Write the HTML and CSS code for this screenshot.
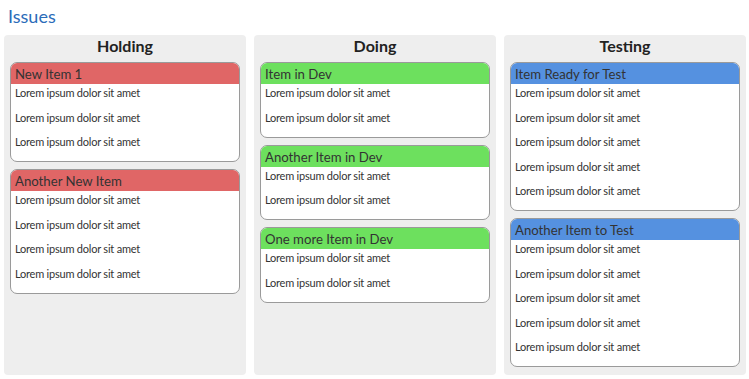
FILE: index.html
```html
<!DOCTYPE html>
<html>
<head>
<meta charset="utf-8">
<link rel="stylesheet" href="styles.css">
</head>
<body>
<h1 class="title">Issues</h1>
<div class="board">
  <section class="column">
    <h2 class="column-title">Holding</h2>
    <div class="card card-red">
      <div class="card-head">New Item 1</div>
      <div class="card-body">
        <p>Lorem ipsum dolor sit amet</p>
        <p>Lorem ipsum dolor sit amet</p>
        <p>Lorem ipsum dolor sit amet</p>
      </div>
    </div>
    <div class="card card-red">
      <div class="card-head">Another New Item</div>
      <div class="card-body">
        <p>Lorem ipsum dolor sit amet</p>
        <p>Lorem ipsum dolor sit amet</p>
        <p>Lorem ipsum dolor sit amet</p>
        <p>Lorem ipsum dolor sit amet</p>
      </div>
    </div>
  </section>
  <section class="column">
    <h2 class="column-title">Doing</h2>
    <div class="card card-green">
      <div class="card-head">Item in Dev</div>
      <div class="card-body">
        <p>Lorem ipsum dolor sit amet</p>
        <p>Lorem ipsum dolor sit amet</p>
      </div>
    </div>
    <div class="card card-green">
      <div class="card-head">Another Item in Dev</div>
      <div class="card-body">
        <p>Lorem ipsum dolor sit amet</p>
        <p>Lorem ipsum dolor sit amet</p>
      </div>
    </div>
    <div class="card card-green">
      <div class="card-head">One more Item in Dev</div>
      <div class="card-body">
        <p>Lorem ipsum dolor sit amet</p>
        <p>Lorem ipsum dolor sit amet</p>
      </div>
    </div>
  </section>
  <section class="column">
    <h2 class="column-title">Testing</h2>
    <div class="card card-blue">
      <div class="card-head">Item Ready for Test</div>
      <div class="card-body">
        <p>Lorem ipsum dolor sit amet</p>
        <p>Lorem ipsum dolor sit amet</p>
        <p>Lorem ipsum dolor sit amet</p>
        <p>Lorem ipsum dolor sit amet</p>
        <p>Lorem ipsum dolor sit amet</p>
      </div>
    </div>
    <div class="card card-blue">
      <div class="card-head">Another Item to Test</div>
      <div class="card-body">
        <p>Lorem ipsum dolor sit amet</p>
        <p>Lorem ipsum dolor sit amet</p>
        <p>Lorem ipsum dolor sit amet</p>
        <p>Lorem ipsum dolor sit amet</p>
        <p>Lorem ipsum dolor sit amet</p>
      </div>
    </div>
  </section>
</div>
</body>
</html>
```
FILE: styles.css
```css
html, body {
  margin: 0;
  padding: 0;
  height: 100%;
}
body {
  font-family: Lato, "Open Sans", sans-serif;
  color: #333;
  background: #fff;
  box-sizing: border-box;
  padding: 4px 3px 4px 4px;
  display: flex;
  flex-direction: column;
}
.title {
  margin: 0 0 0 4px;
  height: 31px;
  font-size: 18px;
  line-height: 24px;
  font-weight: normal;
  color: #2b6cb9;
}
.board {
  flex: 1;
  display: grid;
  grid-template-columns: 1fr 1fr 1fr;
  gap: 8px;
}
.column {
  background: #eeeeee;
  border-radius: 4px;
  padding: 0 6px;
}
.column-title {
  margin: 0;
  height: 27px;
  font-size: 16px;
  line-height: 22px;
  box-sizing: border-box;
  text-align: center;
  font-weight: bold;
  color: #222;
}
.card {
  background: #fff;
  border: 1px solid #9a9a9a;
  border-radius: 7px;
  overflow: hidden;
  margin-bottom: 7px;
}
.card-head {
  height: 21px;
  line-height: 22px;
  font-size: 13.2px;
  padding: 0 4px;
  color: #333;
}
.card-red .card-head { background: #e06666; }
.card-green .card-head { background: #6de05e; }
.card-blue .card-head { background: #5591e0; }
.card-body {
  padding: 2px 4px 1.5px;
}
.card-body p {
  margin: 0 0 10px;
  font-size: 11px;
  line-height: 14.5px;
  letter-spacing: -0.22px;
}
```
